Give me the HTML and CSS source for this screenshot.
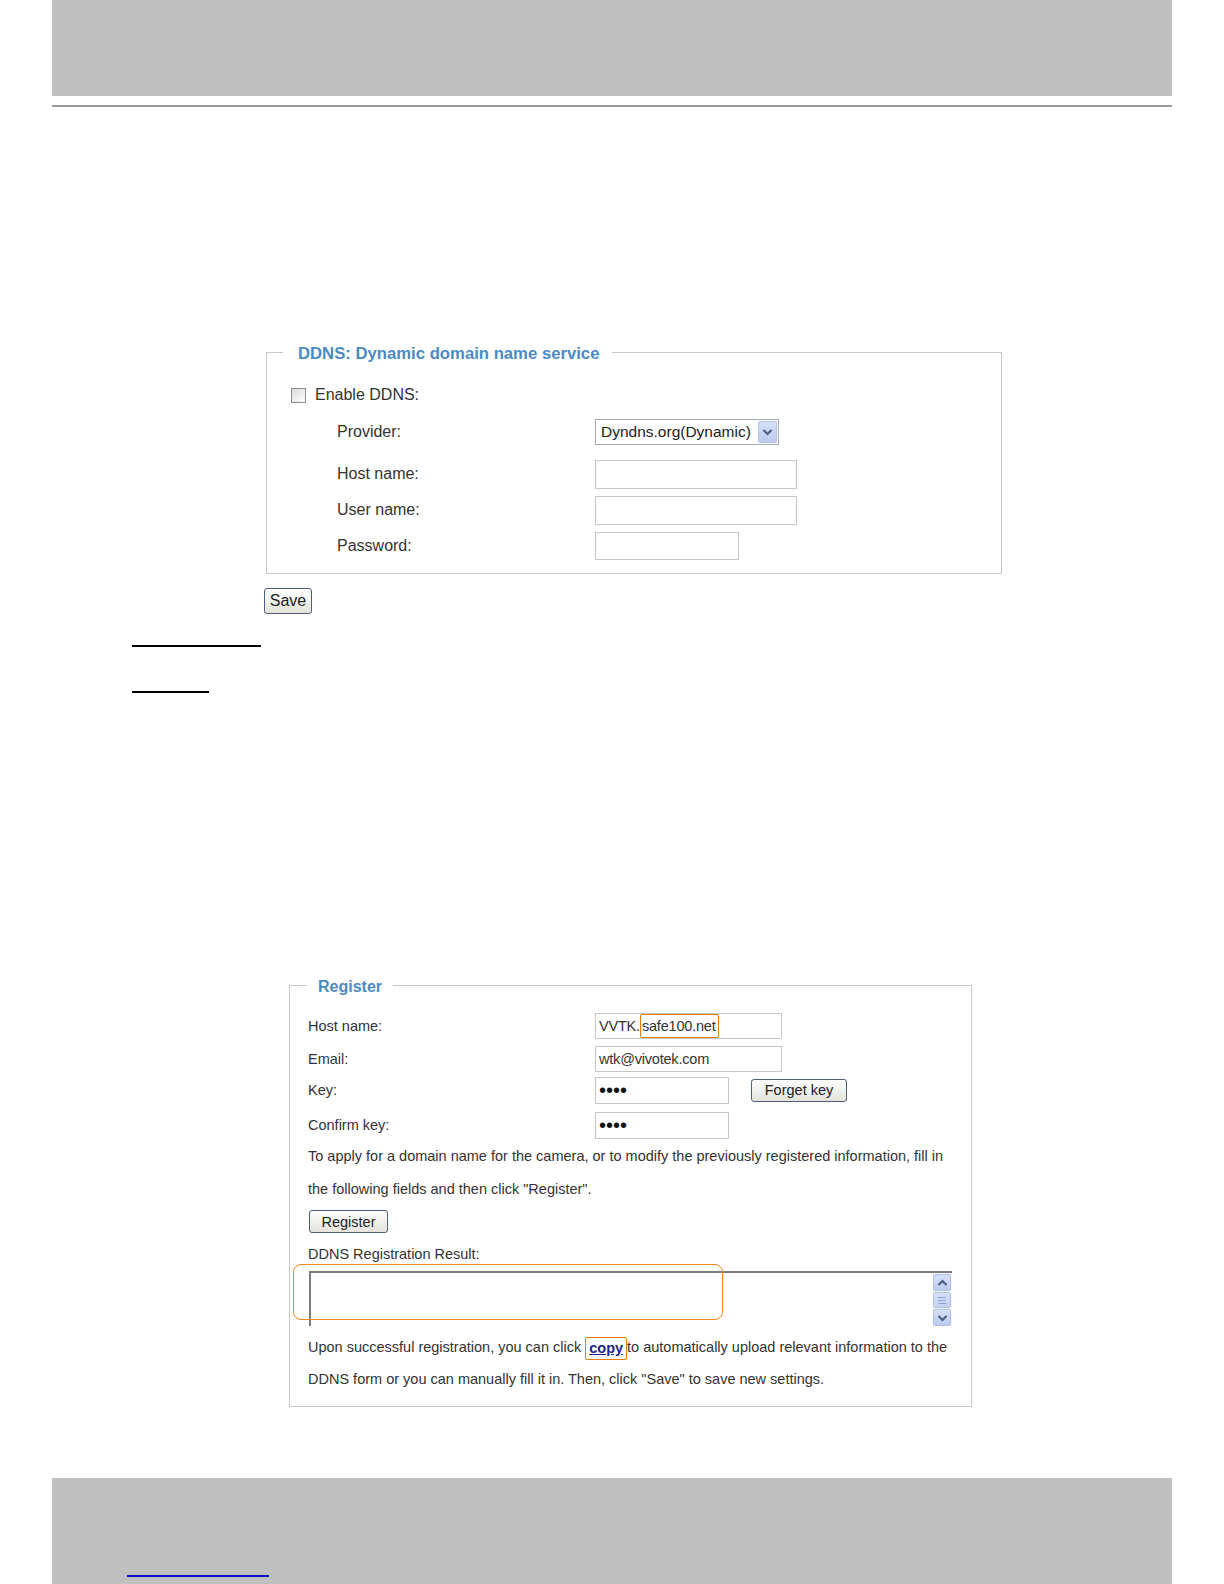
FILE: index.html
```html
<!DOCTYPE html>
<html lang="en">
<head>
  <meta charset="UTF-8">
  <title>DDNS Settings</title>
  <link rel="stylesheet" href="styles.css">
</head>
<body>
  <div class="page-head"></div>
  <div class="head-rule"></div>

  <fieldset class="box ddns">
    <legend>DDNS: Dynamic domain name service</legend>
    <div class="row enable">
      <input type="checkbox" id="enable">
      <label for="enable">Enable DDNS:</label>
    </div>
    <div class="row sub provider">
      <label>Provider:</label>
      <div class="select">
        <span>Dyndns.org(Dynamic)</span>
        <span class="drop">
          <svg width="11" height="8" viewBox="0 0 11 8"><path d="M1.5 2 L5.5 6 L9.5 2" fill="none" stroke="#4a5f86" stroke-width="2.2"/></svg>
        </span>
      </div>
    </div>
    <div class="row sub host">
      <label>Host name:</label>
      <input type="text" class="field wide">
    </div>
    <div class="row sub user">
      <label>User name:</label>
      <input type="text" class="field wide">
    </div>
    <div class="row sub pass">
      <label>Password:</label>
      <input type="password" class="field short">
    </div>
  </fieldset>
  <button class="btn save">Save</button>

  <div class="rule-a"></div>
  <div class="rule-b"></div>

  <fieldset class="box register">
    <legend>Register</legend>
    <div class="reg-row r-host">
      <label>Host name:</label>
      <div class="field txt wide">VVTK.<span class="mark">safe100.net</span></div>
    </div>
    <div class="reg-row r-email">
      <label>Email:</label>
      <div class="field txt wide">wtk@vivotek.com</div>
    </div>
    <div class="reg-row r-key">
      <label>Key:</label>
      <input type="password" class="field key" value="abcd">
      <button class="btn forget">Forget key</button>
    </div>
    <div class="reg-row r-confirm">
      <label>Confirm key:</label>
      <input type="password" class="field key" value="abcd">
    </div>
    <p class="note">To apply for a domain name for the camera, or to modify the previously registered information, fill in<br>the following fields and then click "Register".</p>
    <button class="btn reg">Register</button>
    <div class="result-label">DDNS Registration Result:</div>
    <div class="result">
      <div class="result-text"></div>
      <div class="scroll">
        <span class="arrow">
          <svg width="11" height="8" viewBox="0 0 11 8"><path d="M1.5 6 L5.5 2 L9.5 6" fill="none" stroke="#4a5f86" stroke-width="2.2"/></svg>
        </span>
        <span class="thumb"><i></i><i></i><i></i></span>
        <span class="arrow">
          <svg width="11" height="8" viewBox="0 0 11 8"><path d="M1.5 2 L5.5 6 L9.5 2" fill="none" stroke="#4a5f86" stroke-width="2.2"/></svg>
        </span>
      </div>
      <span class="result-mark"></span>
    </div>
    <p class="note upload">Upon successful registration, you can click <span class="copy-mark"><a href="#">copy</a></span>to automatically upload relevant information to the<br>DDNS form or you can manually fill it in. Then, click "Save" to save new settings.</p>
  </fieldset>

  <div class="page-foot"><span class="foot-link"></span></div>
</body>
</html>
```

FILE: styles.css
```css
body {
  margin: 0;
  font-family: "Liberation Sans", Arial, sans-serif;
  color: #333;
  background: #fff;
}
.page-head {
  height: 96px;
  margin: 0 52px;
  background: #c0c0c0;
}
.head-rule {
  height: 2px;
  margin: 9px 52px 0;
  background: #999;
}

/* fieldsets */
.box {
  margin: 0;
  padding: 0;
  border: 1px solid #c8c8c8;
  min-width: 0;
  box-sizing: border-box;
}
.box legend {
  color: #4b8bc4;
  font-weight: bold;
  font-size: 16px;
  line-height: 20px;
  padding-top: 4px;
}
.ddns {
  margin: 233px 0 0 266px;
  width: 736px;
  padding-bottom: 11px;
}
.ddns legend {
  margin-left: 16px;
  padding: 4px 13px 0 15px;
  font-size: 16.7px;
}
.row {
  display: flex;
  align-items: center;
  height: 32px;
  font-size: 16px;
}
.enable {
  margin-top: 15px;
  padding-left: 24px;
}
.enable input {
  appearance: none;
  width: 15px;
  height: 15px;
  margin: 1px 9px 0 0;
  border: 1px solid #8d8d8d;
  background: linear-gradient(135deg, #d9d9d9, #fdfdfd);
}
.sub {
  padding-left: 70px;
}
.sub label {
  width: 258px;
}
.provider { margin-top: 5px; }
.host { margin-top: 10px; }
.user, .pass { margin-top: 4px; }

.field {
  box-sizing: border-box;
  margin: 0;
  border: 1px solid #c6c6c6;
  background: #fff;
  font-family: "Liberation Sans", Arial, sans-serif;
}
.ddns .wide { width: 202px; height: 29px; }
.ddns .short { width: 144px; height: 28px; }

.select {
  box-sizing: border-box;
  display: flex;
  align-items: center;
  width: 184px;
  height: 26px;
  padding-left: 5px;
  border: 1px solid #a7acb3;
  color: #222;
  font-size: 15.5px;
}
.drop, .arrow {
  display: flex;
  align-items: center;
  justify-content: center;
  box-sizing: border-box;
  background: linear-gradient(#d6e0f8, #bccbf1);
  border: 1px solid #b3c2ea;
  border-radius: 2px;
}
.drop {
  margin-left: auto;
  margin-right: 1px;
  width: 19px;
  height: 22px;
}

.btn {
  display: block;
  box-sizing: border-box;
  padding: 0;
  border: 1px solid #4f5f78;
  border-radius: 3px;
  background: linear-gradient(#fefefe, #e4e4dc);
  color: #222;
  font-family: "Liberation Sans", Arial, sans-serif;
}
.save {
  margin: 14px 0 0 264px;
  width: 48px;
  height: 26px;
  font-size: 16px;
}

.rule-a {
  width: 129px;
  height: 2px;
  margin: 31px 0 0 132px;
  background: #000;
}
.rule-b {
  width: 77px;
  height: 2px;
  margin: 44px 0 0 132px;
  background: #000;
}

/* register */
.register {
  margin: 280px 0 0 289px;
  width: 683px;
  padding: 0 0 11px 18px;
  font-size: 14.5px;
}
.register legend {
  margin-left: -1px;
  padding: 4px 11px 0;
}
.reg-row {
  display: flex;
  align-items: center;
  height: 30px;
}
.reg-row label {
  width: 287px;
}
.r-host { margin-top: 14px; }
.r-email { margin-top: 3px; }
.r-key { margin-top: 1px; }
.r-confirm { margin-top: 5px; }
.txt {
  display: flex;
  align-items: center;
  padding-left: 3px;
  font-size: 14.5px;
  letter-spacing: -0.2px;
  color: #333;
}
.register .wide { width: 187px; height: 26px; }
.register .key {
  width: 134px;
  height: 27px;
  padding-left: 3px;
  font-size: 20px;
  letter-spacing: 0;
  color: #111;
}
.mark {
  display: inline-block;
  box-sizing: border-box;
  height: 24px;
  line-height: 22px;
  padding: 0 2px 0 1px;
  border: 1px solid #e27d12;
  border-radius: 2px;
}
.forget {
  margin-left: 22px;
  width: 96px;
  height: 23px;
  font-size: 14.5px;
}
.note {
  margin: 0;
  line-height: 33px;
}
.reg {
  margin: 4px 0 0 1px;
  width: 79px;
  height: 23px;
  font-size: 14.5px;
}
.result-label {
  margin-top: 9px;
  line-height: 24px;
}
.result {
  position: relative;
  display: flex;
  margin: 5px 0 0 1px;
  width: 643px;
  height: 55px;
  box-sizing: border-box;
  border-top: 2px solid #7c7c7c;
  border-left: 2px solid #7c7c7c;
}
.result-text {
  flex: 1;
}
.scroll {
  display: flex;
  flex-direction: column;
  width: 19px;
  padding-top: 1px;
  background: #f6f7fb;
}
.arrow {
  width: 18px;
  height: 17px;
}
.thumb {
  flex: 1;
  display: flex;
  flex-direction: column;
  justify-content: center;
  gap: 2px;
  margin: 1px 0;
  width: 18px;
  box-sizing: border-box;
  padding: 0 4px;
  background: linear-gradient(#d6e0f8, #c4d1f2);
  border: 1px solid #b3c2ea;
  border-radius: 2px;
}
.thumb i {
  height: 1px;
  background: #8fa3d6;
}
.result-mark {
  position: absolute;
  left: -18px;
  top: -9px;
  width: 430px;
  height: 56px;
  box-sizing: border-box;
  border: 1.5px solid #e88a1e;
  border-radius: 8px;
}
.upload {
  margin-top: 5px;
  line-height: 32px;
}
.copy-mark {
  display: inline-block;
  box-sizing: border-box;
  height: 23px;
  line-height: 21px;
  padding: 0 3px;
  border: 1px solid #e27d12;
  border-radius: 2px;
  vertical-align: middle;
}
.copy-mark a {
  color: #23238c;
  font-weight: bold;
}

.page-foot {
  height: 107px;
  margin: 71px 52px 0;
  padding-left: 75px;
  box-sizing: border-box;
  background: #c0c0c0;
  overflow: hidden;
}
.foot-link {
  display: block;
  width: 142px;
  height: 2px;
  margin-top: 97px;
  background: #1010c8;
}
```
